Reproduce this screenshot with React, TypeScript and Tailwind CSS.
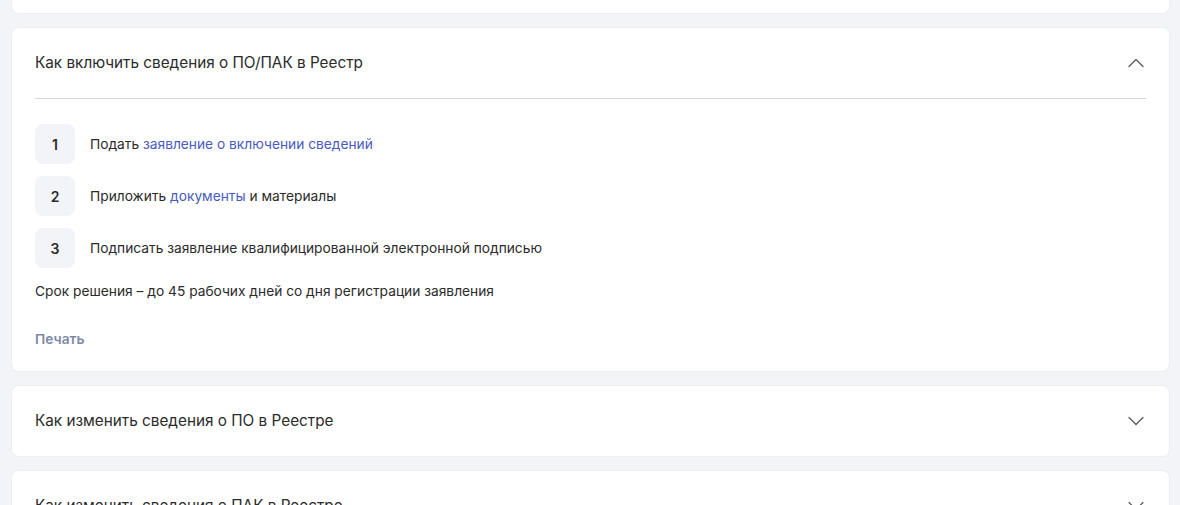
import { ChevronUp, ChevronDown } from "lucide-react";

const steps = [
  { n: 1, before: "Подать ", link: "заявление о включении сведений", after: "" },
  { n: 2, before: "Приложить ", link: "документы", after: " и материалы" },
  { n: 3, before: "Подписать заявление квалифицированной электронной подписью", link: "", after: "" },
];

function Collapsed({ title }: { title: string }) {
  return (
    <div className="rounded-[8px] border border-[#eceef2] bg-white">
      <div className="flex h-[70px] items-center justify-between px-[23px]">
        <div className="text-[15.3px] text-[#2b2b2b]">{title}</div>
        <ChevronDown className="-mr-[4px] h-[28px] w-[28px] text-[#555]" strokeWidth={1.05} />
      </div>
    </div>
  );
}

export default function App() {
  return (
    <div
      className="flex h-[505px] flex-col gap-[13px] overflow-hidden bg-[#f3f4f8] pl-[11px] pr-[10px]"
      style={{ fontFamily: "Inter, 'Noto Sans', sans-serif" }}
    >
      <div className="h-[14px] shrink-0 rounded-b-[8px] border border-t-0 border-[#eceef2] bg-white" />

      <div className="shrink-0 rounded-[8px] border border-[#eceef2] bg-white px-[23px]">
        <div className="flex h-[71px] items-center justify-between border-b border-[#d4d6db]">
          <div className="text-[15.3px] text-[#2b2b2b]">Как включить сведения о ПО/ПАК в Реестр</div>
          <ChevronUp className="-mr-[4px] h-[28px] w-[28px] text-[#555]" strokeWidth={1.05} />
        </div>
        <div className="flex flex-col gap-[12px] pt-[25px]">
          {steps.map((s) => (
            <div key={s.n} className="flex items-center gap-[15px]">
              <div className="flex h-[40px] w-[40px] items-center justify-center rounded-[8px] bg-[#f3f4f8] text-[14px] font-semibold text-[#2b2b2b]">
                {s.n}
              </div>
              <div className="text-[13.75px] text-[#2b2b2b]">
                {s.before}
                {s.link && <span className="text-[#4a5bbf]">{s.link}</span>}
                {s.after}
              </div>
            </div>
          ))}
        </div>
        <div className="mt-[13px] text-[13.75px] leading-[20px] text-[#2b2b2b]">
          Срок решения – до 45 рабочих дней со дня регистрации заявления
        </div>
        <div className="mt-[28px] pb-[22px] text-[13.75px] font-semibold leading-[20px] text-[#7d8aa5]">Печать</div>
      </div>

      <div className="shrink-0">
        <Collapsed title="Как изменить сведения о ПО в Реестре" />
      </div>
      <div className="shrink-0">
        <Collapsed title="Как изменить сведения о ПАК в Реестре" />
      </div>
    </div>
  );
}
